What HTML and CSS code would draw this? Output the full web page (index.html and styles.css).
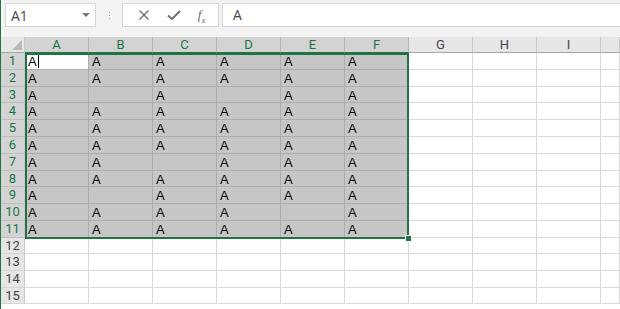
FILE: index.html
```html
<!DOCTYPE html>
<html lang="en">
<head>
    <meta charset="UTF-8">
    <title>Book1 - Excel</title>
    <link rel="stylesheet" href="styles.css">
</head>
<body>
    <div class="app">
        <!-- formula bar -->
        <div class="toolbar">
            <div class="namebox">
                <span>A1</span>
                <span class="caret-down"></span>
            </div>
            <div class="grip"><i></i><i></i><i></i></div>
            <div class="fxbtns">
                <svg width="12" height="12" viewBox="0 0 12 12"><path d="M1.5 1.5 L10.5 10.5 M10.5 1.5 L1.5 10.5" stroke="#707070" stroke-width="1.4" fill="none"/></svg>
                <svg width="14" height="12" viewBox="0 0 14 12"><path d="M1 6.5 L5 10 L13 2" stroke="#707070" stroke-width="2" fill="none"/></svg>
                <span class="fx">f<sub>x</sub></span>
            </div>
            <div class="formula">A</div>
        </div>

        <!-- grid -->
        <div class="sheet">
            <div class="corner"><svg width="10" height="10" viewBox="0 0 10 10"><path d="M10 0 L10 10 L0 10 z" fill="#b9b9b9"/></svg></div>
            <div class="ch on">A</div><div class="ch on">B</div><div class="ch on">C</div><div class="ch on">D</div><div class="ch on">E</div><div class="ch on">F</div><div class="ch">G</div><div class="ch">H</div><div class="ch">I</div><div class="ch"></div>

            <div class="rh on">1</div><div class="c s act">A<span class="cursor"></span></div><div class="c s">A</div><div class="c s">A</div><div class="c s">A</div><div class="c s">A</div><div class="c s">A</div><div class="c"></div><div class="c"></div><div class="c"></div><div class="c"></div>
            <div class="rh on">2</div><div class="c s">A</div><div class="c s">A</div><div class="c s">A</div><div class="c s">A</div><div class="c s">A</div><div class="c s">A</div><div class="c"></div><div class="c"></div><div class="c"></div><div class="c"></div>
            <div class="rh on">3</div><div class="c s">A</div><div class="c s"></div><div class="c s">A</div><div class="c s"></div><div class="c s">A</div><div class="c s">A</div><div class="c"></div><div class="c"></div><div class="c"></div><div class="c"></div>
            <div class="rh on">4</div><div class="c s">A</div><div class="c s">A</div><div class="c s">A</div><div class="c s">A</div><div class="c s">A</div><div class="c s">A</div><div class="c"></div><div class="c"></div><div class="c"></div><div class="c"></div>
            <div class="rh on">5</div><div class="c s">A</div><div class="c s">A</div><div class="c s">A</div><div class="c s">A</div><div class="c s">A</div><div class="c s">A</div><div class="c"></div><div class="c"></div><div class="c"></div><div class="c"></div>
            <div class="rh on">6</div><div class="c s">A</div><div class="c s">A</div><div class="c s">A</div><div class="c s">A</div><div class="c s">A</div><div class="c s">A</div><div class="c"></div><div class="c"></div><div class="c"></div><div class="c"></div>
            <div class="rh on">7</div><div class="c s">A</div><div class="c s">A</div><div class="c s"></div><div class="c s">A</div><div class="c s">A</div><div class="c s">A</div><div class="c"></div><div class="c"></div><div class="c"></div><div class="c"></div>
            <div class="rh on">8</div><div class="c s">A</div><div class="c s">A</div><div class="c s">A</div><div class="c s">A</div><div class="c s">A</div><div class="c s">A</div><div class="c"></div><div class="c"></div><div class="c"></div><div class="c"></div>
            <div class="rh on">9</div><div class="c s">A</div><div class="c s"></div><div class="c s">A</div><div class="c s">A</div><div class="c s">A</div><div class="c s">A</div><div class="c"></div><div class="c"></div><div class="c"></div><div class="c"></div>
            <div class="rh on">10</div><div class="c s">A</div><div class="c s">A</div><div class="c s">A</div><div class="c s">A</div><div class="c s"></div><div class="c s">A</div><div class="c"></div><div class="c"></div><div class="c"></div><div class="c"></div>
            <div class="rh on">11</div><div class="c s">A</div><div class="c s">A</div><div class="c s">A</div><div class="c s">A</div><div class="c s">A</div><div class="c s">A</div><div class="c"></div><div class="c"></div><div class="c"></div><div class="c"></div>
            <div class="rh">12</div><div class="c"></div><div class="c"></div><div class="c"></div><div class="c"></div><div class="c"></div><div class="c"></div><div class="c"></div><div class="c"></div><div class="c"></div><div class="c"></div>
            <div class="rh">13</div><div class="c"></div><div class="c"></div><div class="c"></div><div class="c"></div><div class="c"></div><div class="c"></div><div class="c"></div><div class="c"></div><div class="c"></div><div class="c"></div>
            <div class="rh">14</div><div class="c"></div><div class="c"></div><div class="c"></div><div class="c"></div><div class="c"></div><div class="c"></div><div class="c"></div><div class="c"></div><div class="c"></div><div class="c"></div>
            <div class="rh">15</div><div class="c"></div><div class="c"></div><div class="c"></div><div class="c"></div><div class="c"></div><div class="c"></div><div class="c"></div><div class="c"></div><div class="c"></div><div class="c"></div>

            <!-- selection A1:F11 -->
            <div class="selection"><span class="handle"></span></div>
        </div>
    </div>
</body>
</html>
```

FILE: styles.css
```css
body {
    margin: 0;
    overflow: hidden;
    background: #ffffff;
    font-family: "Open Sans", "Noto Sans", sans-serif;
}
.app {
    border-left: 1px solid #217346;
    height: 309px;
}
.toolbar {
    display: flex;
    align-items: flex-start;
    height: 37px;
    box-sizing: border-box;
    padding: 3px 0 0 4px;
    background: #f3f3f3;
}
.namebox {
    display: flex;
    align-items: center;
    justify-content: space-between;
    width: 91px;
    height: 24px;
    box-sizing: border-box;
    padding: 0 5px 0 5px;
    background: #fff;
    border: 1px solid #d6d6d6;
    font-size: 14px;
    color: #444;
}
.caret-down {
    width: 0;
    height: 0;
    border-left: 4px solid transparent;
    border-right: 4px solid transparent;
    border-top: 4px solid #777;
}
.grip {
    width: 26px;
    height: 24px;
    display: flex;
    flex-direction: column;
    align-items: center;
    justify-content: center;
    gap: 2px;
}
.grip i {
    width: 1px;
    height: 1px;
    background: #a8a8a8;
}
.fxbtns {
    display: flex;
    align-items: center;
    justify-content: space-around;
    width: 97px;
    height: 24px;
    box-sizing: border-box;
    padding: 0 4px 0 6px;
    background: #fff;
    border: 1px solid #d6d6d6;
}
.fx {
    font-family: "Liberation Serif", serif;
    font-style: italic;
    font-size: 13px;
    line-height: 14px;
    color: #6a6a6a;
}
.fx sub {
    font-size: 9px;
    line-height: 0;
}
.formula {
    flex: 1;
    height: 24px;
    margin-left: 3px;
    box-sizing: border-box;
    padding-left: 10px;
    background: #fff;
    border: 1px solid #d6d6d6;
    border-right: none;
    font-size: 14px;
    line-height: 22px;
    color: #444;
}

.sheet {
    position: relative;
    display: grid;
    grid-template-columns: 24px repeat(9, 64px) 1fr;
    grid-template-rows: 16px 17px 17px 16px 17px 17px 17px 17px 16px 17px 17px 17px 16px 17px 17px 16px;
}
.corner {
    background: #e6e6e6;
    border-right: 1px solid #c9c9c9;
    border-bottom: 1px solid #a5a5a5;
    display: flex;
    align-items: flex-end;
    justify-content: flex-end;
    padding: 0 2px 2px 0;
    box-sizing: border-box;
}
.ch {
    background: #e6e6e6;
    border-right: 1px solid #c9c9c9;
    border-bottom: 1px solid #a5a5a5;
    box-sizing: border-box;
    text-align: center;
    font-family: Roboto, "Open Sans", sans-serif;
    font-size: 13px;
    line-height: 15px;
    color: #444;
}
.ch.on {
    background: #d3d3d3;
    color: #217346;
    border-right-color: #b5b5b5;
    border-bottom-color: #217346;
}
.rh {
    background: #e6e6e6;
    border-right: 1px solid #c9c9c9;
    border-bottom: 1px solid #d6d6d6;
    box-sizing: border-box;
    text-align: center;
    font-family: Roboto, "Open Sans", sans-serif;
    font-size: 13px;
    line-height: 15px;
    color: #444;
}
.rh.on {
    background: #d3d3d3;
    color: #217346;
    border-bottom-color: #bcbcbc;
}
.c {
    border-right: 1px solid #dadada;
    border-bottom: 1px solid #dadada;
    box-sizing: border-box;
    padding: 1px 0 0 3px;
    font-family: "Liberation Sans", Arial, sans-serif;
    font-size: 13px;
    line-height: 15px;
    color: #000;
}
.c.s {
    background: #c6c6c6;
    border-color: #adadad;
}
.c.act {
    background: #fff;
}
.cursor {
    display: inline-block;
    width: 1px;
    height: 13px;
    margin-left: 1px;
    vertical-align: -2px;
    background: #000;
}
.selection {
    position: absolute;
    left: 24px;
    top: 16px;
    width: 384px;
    height: 186px;
    box-sizing: border-box;
    border: 2px solid #217346;
    pointer-events: none;
}
.handle {
    position: absolute;
    right: -5px;
    bottom: -5px;
    width: 5px;
    height: 5px;
    background: #217346;
    border: 1px solid #fff;
}
```
